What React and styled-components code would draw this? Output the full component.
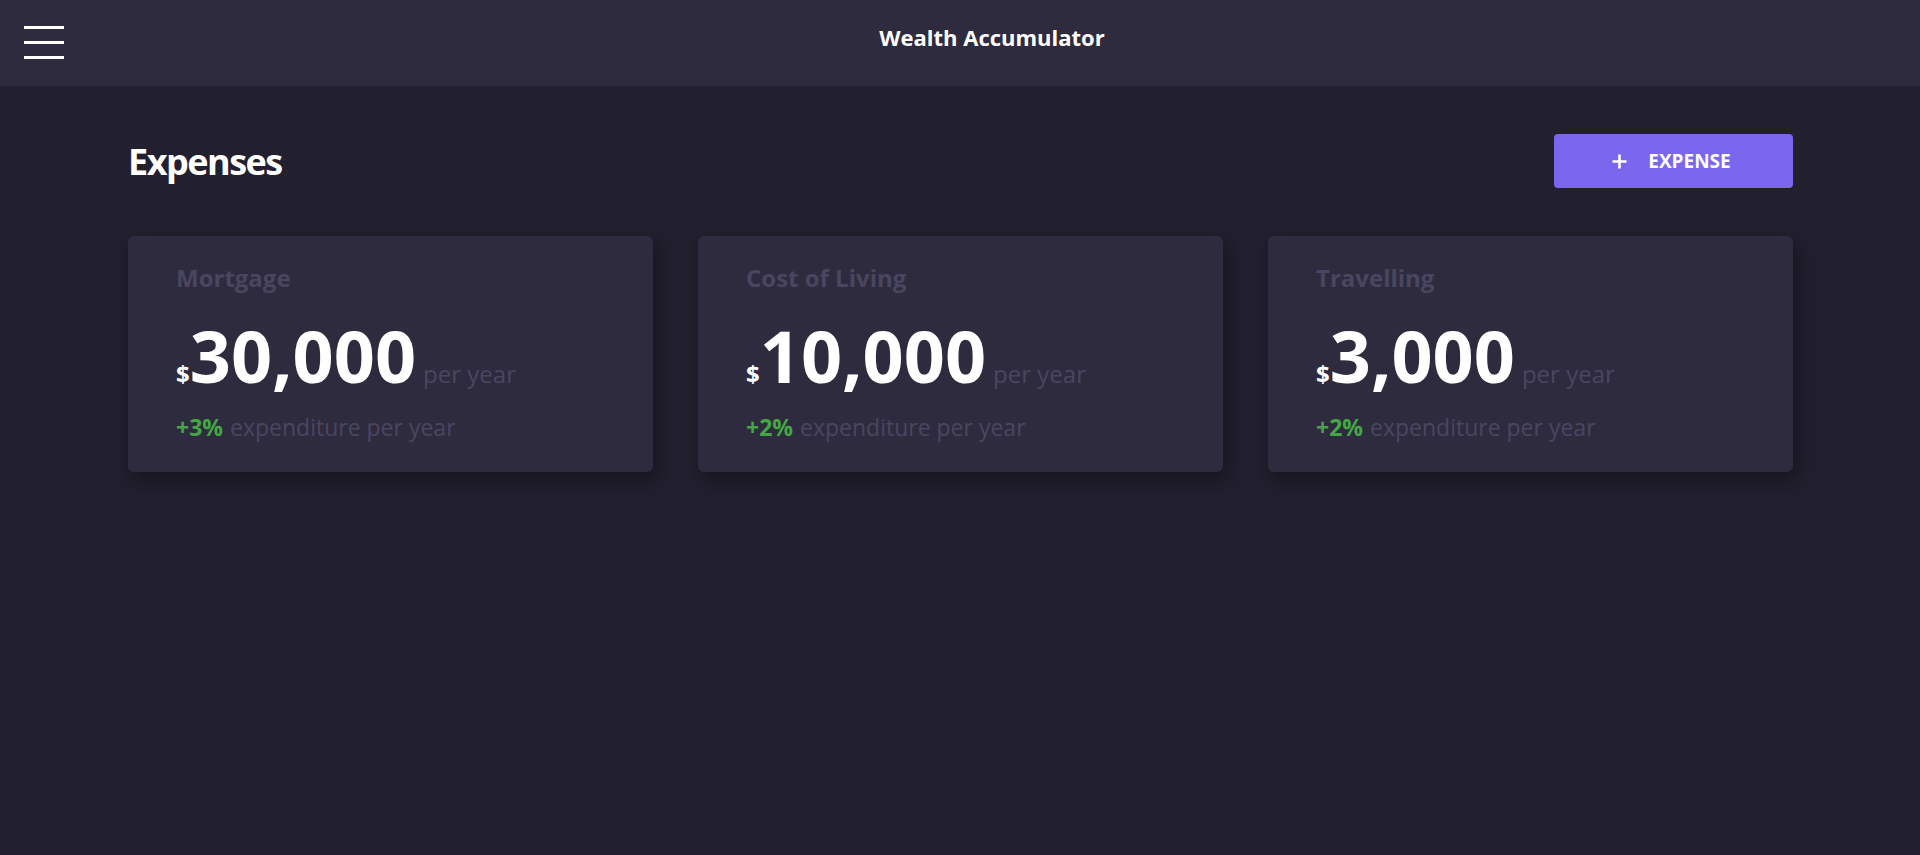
import React from "react";
import styled, { createGlobalStyle } from "styled-components";

const Global = createGlobalStyle`
  html, body { margin: 0; padding: 0; background: #221f2e; }
  body { font-family: "Open Sans", Lato, sans-serif; color: #fff; min-height: 855px; }
  * { box-sizing: border-box; }
`;

const Page = styled.div`
  min-height: 855px;
  background: #221f2e;
`;

const Header = styled.header`
  height: 86px;
  background: #2e2b3f;
  display: flex;
  align-items: flex-start;
`;

const MenuButton = styled.button`
  margin-left: 24px;
  margin-top: 25.5px;
  padding: 0;
  width: 40px;
  background: none;
  border: 0;
  display: flex;
  flex-direction: column;
  gap: 12px;
  cursor: pointer;
`;

const MenuLine = styled.span`
  display: block;
  width: 40px;
  height: 3px;
  background: #ffffff;
`;

const AppTitle = styled.h1`
  flex: 1;
  margin: 24px 0 0;
  text-align: center;
  font-size: 22px;
  line-height: 26px;
  font-weight: 700;
  color: #ffffff;
`;

const Main = styled.main`
  padding: 48px 127px 0 128px;
`;

const TopRow = styled.div`
  display: flex;
  align-items: center;
  justify-content: space-between;
`;

const Heading = styled.h2`
  margin: 0;
  padding-top: 2px;
  font-size: 36px;
  line-height: 1.2;
  font-weight: 700;
  letter-spacing: -1.5px;
  color: #ffffff;
`;

const AddButton = styled.button`
  width: 239px;
  height: 54px;
  border: 0;
  border-radius: 4px;
  background: #7b66ee;
  color: #ffffff;
  font-family: "Open Sans", sans-serif;
  font-weight: 700;
  font-size: 19px;
  display: flex;
  align-items: center;
  justify-content: center;
  gap: 20px;
  cursor: pointer;
  padding: 0 5px 0 0;
`;

const Cards = styled.div`
  margin-top: 48px;
  display: grid;
  grid-template-columns: repeat(3, 1fr);
  gap: 45px;
`;

const Card = styled.div`
  height: 236px;
  background: #2e2b3f;
  border-radius: 6px;
  padding: 28px 48px 0;
  box-shadow: 4px 8px 18px rgba(10, 8, 18, 0.45);
`;

const CardTitle = styled.div`
  font-size: 24px;
  line-height: 1.2;
  font-weight: 700;
  color: #4a4660;
`;

const AmountRow = styled.div`
  margin-top: 26px;
  display: flex;
  align-items: baseline;
  height: 72px;
`;

const Currency = styled.span`
  font-size: 24px;
  font-weight: 700;
  line-height: 1.2;
  color: #ffffff;
`;

const Amount = styled.span`
  font-size: 72px;
  font-weight: 700;
  line-height: 72px;
  color: #ffffff;
`;

const Period = styled.span`
  margin-left: 7px;
  font-size: 24px;
  line-height: 1.2;
  color: #4a4660;
`;

const Growth = styled.div`
  margin-top: 23px;
  font-size: 23px;
  line-height: 1.2;
  color: #4a4660;
`;

const Rate = styled.span`
  color: #43a843;
  font-weight: 700;
  margin-right: 7px;
`;

const expenses = [
  { name: "Mortgage", amount: "30,000", rate: "+3%" },
  { name: "Cost of Living", amount: "10,000", rate: "+2%" },
  { name: "Travelling", amount: "3,000", rate: "+2%" },
];

export default function App() {
  return (
    <Page>
      <Global />
      <Header>
        <MenuButton aria-label="menu">
          <MenuLine />
          <MenuLine />
          <MenuLine />
        </MenuButton>
        <AppTitle>Wealth Accumulator</AppTitle>
      </Header>
      <Main>
        <TopRow>
          <Heading>Expenses</Heading>
          <AddButton>
            <svg width="17" height="17" viewBox="0 0 17 17">
              <path d="M8.5 1.5v14M1.5 8.5h14" stroke="#fff" strokeWidth="2.6" fill="none" />
            </svg>
            <span>EXPENSE</span>
          </AddButton>
        </TopRow>
        <Cards>
          {expenses.map((e) => (
            <Card key={e.name}>
              <CardTitle>{e.name}</CardTitle>
              <AmountRow>
                <Currency>$</Currency>
                <Amount>{e.amount}</Amount>
                <Period>per year</Period>
              </AmountRow>
              <Growth>
                <Rate>{e.rate}</Rate>expenditure per year
              </Growth>
            </Card>
          ))}
        </Cards>
      </Main>
    </Page>
  );
}
